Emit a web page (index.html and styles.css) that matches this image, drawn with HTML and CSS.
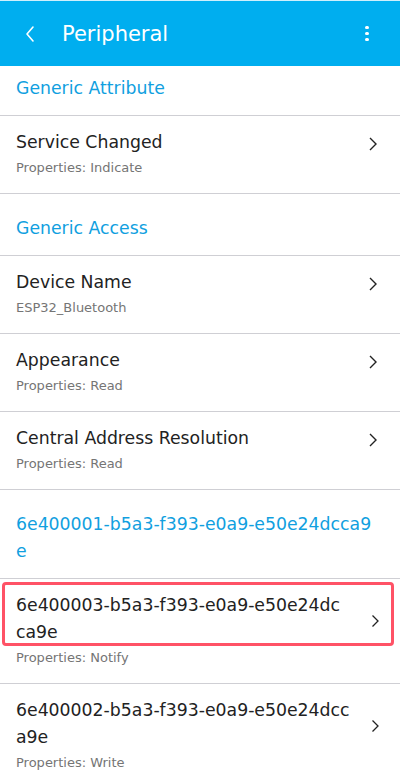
FILE: index.html
```html
<!DOCTYPE html>
<html>
<head>
<meta charset="utf-8">
<link rel="stylesheet" href="styles.css">
</head>
<body>
<div class="screen">
  <header class="appbar">
    <svg class="back" width="12" height="18" viewBox="0 0 12 18"><path d="M9 2 L3 9 L9 16" fill="none" stroke="#fff" stroke-width="1.6" stroke-linecap="round" stroke-linejoin="round"/></svg>
    <h1 class="title">Peripheral</h1>
    <div class="more"><span></span><span></span><span></span></div>
  </header>
  <main class="list">
    <div class="section first">Generic Attribute</div>
    <div class="row">
      <div class="head"><div class="name">Service Changed</div><svg class="chev" width="10" height="14" viewBox="0 0 10 14"><path d="M2 1 L8 7 L2 13" fill="none" stroke="#222" stroke-width="1.4"/></svg></div>
      <div class="props">Properties: Indicate</div>
    </div>
    <div class="section">Generic Access</div>
    <div class="row">
      <div class="head"><div class="name">Device Name</div><svg class="chev" width="10" height="14" viewBox="0 0 10 14"><path d="M2 1 L8 7 L2 13" fill="none" stroke="#222" stroke-width="1.4"/></svg></div>
      <div class="props">ESP32_Bluetooth</div>
    </div>
    <div class="row">
      <div class="head"><div class="name">Appearance</div><svg class="chev" width="10" height="14" viewBox="0 0 10 14"><path d="M2 1 L8 7 L2 13" fill="none" stroke="#222" stroke-width="1.4"/></svg></div>
      <div class="props">Properties: Read</div>
    </div>
    <div class="row">
      <div class="head"><div class="name">Central Address Resolution</div><svg class="chev" width="10" height="14" viewBox="0 0 10 14"><path d="M2 1 L8 7 L2 13" fill="none" stroke="#222" stroke-width="1.4"/></svg></div>
      <div class="props">Properties: Read</div>
    </div>
    <div class="section">6e400001-b5a3-f393-e0a9-e50e24dcca9<br>e</div>
    <div class="row">
      <div class="head"><div class="name">6e400003-b5a3-f393-e0a9-e50e24dc<br>ca9e</div><svg class="chev small" width="9" height="14" viewBox="0 0 9 14"><path d="M1.5 1.5 L7 7 L1.5 12.5" fill="none" stroke="#222" stroke-width="1.3"/></svg></div>
      <div class="props">Properties: Notify</div>
      <div class="mark"></div>
    </div>
    <div class="row">
      <div class="head"><div class="name">6e400002-b5a3-f393-e0a9-e50e24dcc<br>a9e</div><svg class="chev small" width="9" height="14" viewBox="0 0 9 14"><path d="M1.5 1.5 L7 7 L1.5 12.5" fill="none" stroke="#222" stroke-width="1.3"/></svg></div>
      <div class="props">Properties: Write</div>
    </div>
  </main>
</div>
</body>
</html>
```
FILE: styles.css
```css
* { box-sizing: border-box; }
html, body { margin: 0; padding: 0; background: #fff; }
body { font-family: "DejaVu Sans", "Open Sans", sans-serif; }
.screen { width: 400px; height: 779px; overflow: hidden; }
.appbar {
  height: 66px;
  background: #00aeef;
  display: flex;
  align-items: center;
  padding: 0 0 0 24px;
  border-top: 1px solid #cfeffc;
}
.back { flex: none; }
.title {
  margin: 0 0 0 26px;
  font-size: 21px;
  font-weight: 400;
  color: #fff;
  flex: 1;
}
.more {
  width: 64px;
  display: flex;
  flex-direction: column;
  align-items: center;
  gap: 2.5px;
  padding-right: 2px;
}
.more span { width: 3.5px; height: 3.5px; border-radius: 50%; background: #fff; }
.list { display: flex; flex-direction: column; }
.section {
  color: #119fdf;
  font-size: 17.3px;
  line-height: 27px;
  padding: 21px 16px 13px;
  border-bottom: 1px solid #cfcfd4;
  white-space: nowrap;
}
.section.first { padding-top: 9px; padding-bottom: 13px; }
.row {
  position: relative;
  display: flex;
  flex-direction: column;
  padding: 13px 22px 15px 16px;
  border-bottom: 1px solid #cfcfd4;
}
.head { display: flex; align-items: center; }
.name { flex: 1; font-size: 17.3px; line-height: 27px; color: #222; white-space: nowrap; }
.props { font-size: 13px; line-height: 20px; color: #757575; margin-top: 2px; }
.chev { flex: none; margin-top: 3px; }
.chev.small { margin-right: -2px; }
.mark {
  position: absolute;
  left: 2px;
  top: 3px;
  width: 392px;
  height: 64px;
  border: 3px solid #ff5266;
  border-radius: 4px;
  pointer-events: none;
}
```
